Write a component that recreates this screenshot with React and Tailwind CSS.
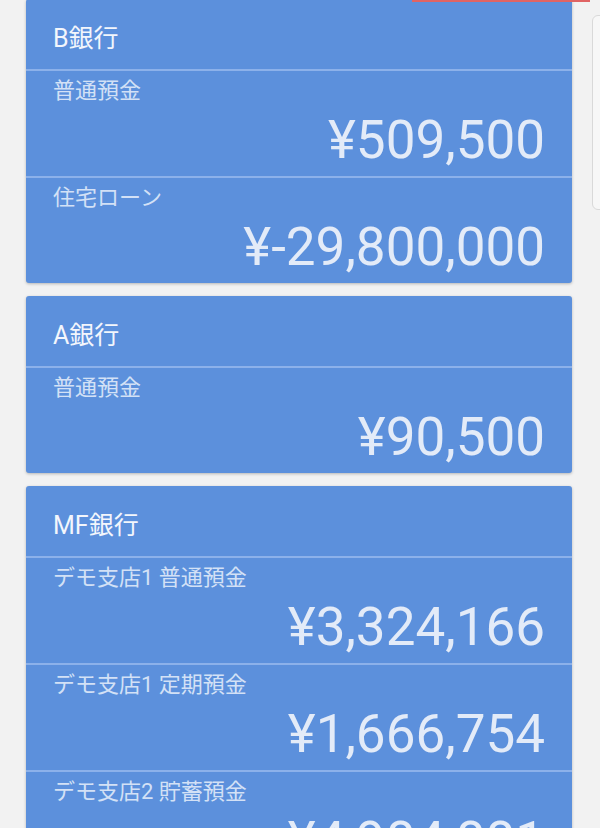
import React from "react";

const banks = [
  {
    name: "B銀行",
    rows: [
      { label: "普通預金", amount: "¥509,500" },
      { label: "住宅ローン", amount: "¥-29,800,000" },
    ],
  },
  {
    name: "A銀行",
    rows: [{ label: "普通預金", amount: "¥90,500" }],
  },
  {
    name: "MF銀行",
    rows: [
      { label: "デモ支店1 普通預金", amount: "¥3,324,166" },
      { label: "デモ支店1 定期預金", amount: "¥1,666,754" },
      { label: "デモ支店2 貯蓄預金", amount: "¥4,984,881" },
    ],
  },
];

function Card({ bank }) {
  return (
    <div className="rounded-[3px] bg-[#5c90dc] shadow-[0_1px_3px_rgba(0,0,0,0.25)]">
      <div className="h-[70px] flex items-center pt-[10px] px-[27px] text-[25px] text-[#f3f6fc]">
        {bank.name}
      </div>
      {bank.rows.map((r, i) => (
        <div key={i} className="border-t-[2px] border-[#8cb1ea] pt-[5px] pb-[6px] px-[27px]">
          <div className="h-[30px] leading-[30px] text-[22px] text-[#d3e1f6]">{r.label}</div>
          <div className="mt-[4px] h-[60px] leading-[60px] text-[53px] text-right text-[#e3ebf8]">
            {r.amount}
          </div>
        </div>
      ))}
    </div>
  );
}

export default function App() {
  return (
    <div
      className="relative h-[828px] w-[600px] overflow-hidden bg-[#f2f2f2]"
      style={{ fontFamily: "Roboto, 'Noto Sans CJK JP', sans-serif" }}
    >
      <div className="absolute left-[412px] top-0 h-[2px] w-[178px] bg-[#e06464]" />
      <div className="absolute left-[592px] top-[15px] h-[195px] w-[30px] rounded-[6px] border border-[#d9d9d9] bg-[#f7f7f7]" />
      <div className="ml-[26px] mt-[-1px] w-[546px] flex flex-col gap-[13px]">
        {banks.map((b) => (
          <Card key={b.name} bank={b} />
        ))}
      </div>
    </div>
  );
}
